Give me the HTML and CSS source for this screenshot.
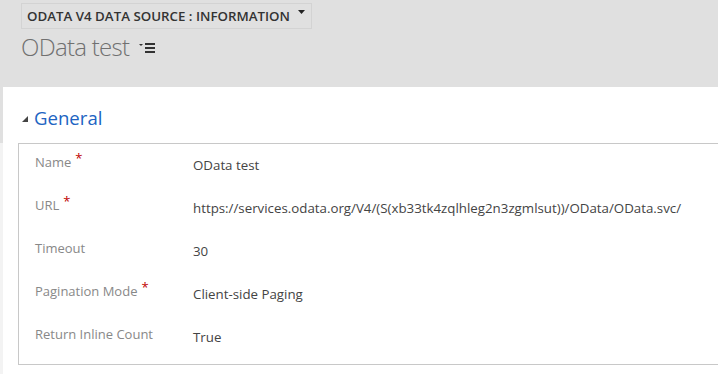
FILE: index.html
```html
<!DOCTYPE html>
<html lang="en">
  <head>
    <meta charset="UTF-8" />
    <meta name="viewport" content="width=device-width, initial-scale=1.0" />
    <title>OData test</title>
    <link rel="stylesheet" href="styles.css">
  </head>
  <body>
    <header class="record-header">
      <div class="form-selector">
        <span>ODATA V4 DATA SOURCE : INFORMATION</span>
        <svg class="caret" width="7" height="4" viewBox="0 0 7 4"><path d="M0 0h7L3.5 4z" fill="#222"/></svg>
      </div>
      <div class="record-title">
        <span>OData test</span>
        <svg class="title-menu" width="17" height="11" viewBox="0 0 17 11">
          <path d="M0 1h4L2 3z" fill="#333"/>
          <rect x="6" y="0" width="10" height="2" fill="#333"/>
          <rect x="6" y="4" width="10" height="2" fill="#333"/>
          <rect x="6" y="8" width="10" height="2" fill="#333"/>
        </svg>
      </div>
    </header>

    <main class="panel">
      <h2 class="section-head">
        <svg class="toggle" width="6" height="6" viewBox="0 0 6 6"><path d="M6 0v6H0z" fill="#444"/></svg>
        <span>General</span>
      </h2>

      <div class="fields">
        <div class="field">
          <div class="label">Name<span class="req">*</span></div>
          <div class="value">OData test</div>
        </div>
        <div class="field">
          <div class="label">URL<span class="req">*</span></div>
          <div class="value">https://services.odata.org/V4/(S(xb33tk4zqlhleg2n3zgmlsut))/OData/OData.svc/</div>
        </div>
        <div class="field">
          <div class="label">Timeout</div>
          <div class="value">30</div>
        </div>
        <div class="field">
          <div class="label">Pagination Mode<span class="req">*</span></div>
          <div class="value">Client-side Paging</div>
        </div>
        <div class="field">
          <div class="label">Return Inline Count</div>
          <div class="value">True</div>
        </div>
      </div>
    </main>
  </body>
</html>
```

FILE: styles.css
```css
* {
  margin: 0;
  padding: 0;
  box-sizing: border-box;
}

body {
  background: linear-gradient(#e0e0e0 0, #e0e0e0 143px, #f3f3f3 143px);
  font-family: "Open Sans", sans-serif;
  height: 100vh;
  overflow: hidden;
}

.record-header {
  height: 87px;
  padding: 3px 0 0 21px;
}

.form-selector {
  display: inline-flex;
  align-items: center;
  height: 26px;
  padding: 0 6px 0 5px;
  border: 1px solid #d3d3d3;
  font-size: 13.3px;
  font-weight: 600;
  color: #333;
}

.caret {
  margin: -8px 0 0 8px;
}

.record-title {
  display: flex;
  align-items: center;
  margin-top: 1px;
  font-size: 24px;
  font-weight: 300;
  color: #707070;
  letter-spacing: -0.7px;
}

.title-menu {
  margin: 4px 0 0 10px;
}

.panel {
  margin-left: 3px;
  background: #fff;
  height: 287px;
  padding-top: 17px;
}

.section-head {
  display: flex;
  align-items: center;
  padding-left: 19px;
  height: 26px;
  font-size: 18.6px;
  font-weight: 400;
  color: #2063c2;
}

.toggle {
  margin: 3px 6px 0 0;
}

.fields {
  margin: 13px 0 0 15px;
  border: 1px solid #c8c8c8;
  border-right: none;
  padding-bottom: 5px;
}

.field {
  display: flex;
  height: 43px;
  padding-top: 8px;
  font-size: 13px;
  line-height: 20px;
}

.label {
  width: 174px;
  padding-left: 16px;
  color: #888;
}

.req {
  color: #c00000;
  margin-left: 4px;
  position: relative;
  top: -4px;
}

.value {
  padding-top: 3px;
  font-size: 13.3px;
  color: #444;
  white-space: nowrap;
}
```
